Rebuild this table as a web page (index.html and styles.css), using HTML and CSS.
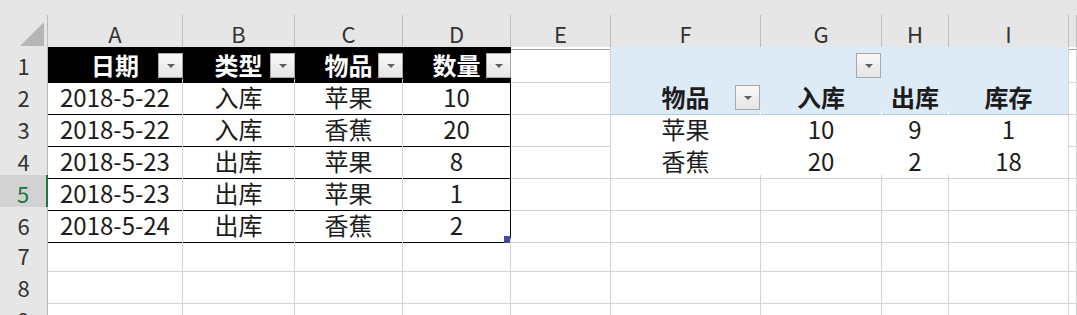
FILE: index.html
```html
<!DOCTYPE html>
<html lang="zh-CN">

<head>
    <meta charset="UTF-8">
    <title>入库出库统计</title>
    <link rel="stylesheet" href="styles.css">
</head>

<body>
    <div class="sheet">
        <!-- franja superior gris -->
        <div class="strip"></div>

        <!-- cabecera de columnas -->
        <div class="row colhead">
            <div class="corner"><span class="tri"></span></div>
            <div>A</div><div>B</div><div>C</div><div>D</div><div>E</div>
            <div>F</div><div>G</div><div>H</div><div>I</div><div></div>
        </div>

        <!-- fila 1: cabecera de la tabla + pivote -->
        <div class="row">
            <div class="rh">1</div>
            <div class="c th"><span></span><b>日期</b><i class="dd"></i></div>
            <div class="c th"><span></span><b>类型</b><i class="dd"></i></div>
            <div class="c th"><span></span><b>物品</b><i class="dd"></i></div>
            <div class="c th th-last"><span></span><b>数量</b><i class="dd"></i></div>
            <div class="c"></div>
            <div class="c pv"></div>
            <div class="c pv btn-cell"><span></span><b></b><i class="dd"></i></div>
            <div class="c pv"></div>
            <div class="c pv pv-end"></div>
            <div class="c"></div>
        </div>

        <div class="row">
            <div class="rh">2</div>
            <div class="c td">2018-5-22</div>
            <div class="c td">入库</div>
            <div class="c td">苹果</div>
            <div class="c td td-last">10</div>
            <div class="c"></div>
            <div class="c pv pv-head btn-cell"><span></span><b>物品</b><i class="dd"></i></div>
            <div class="c pv pv-head"><b>入库</b></div>
            <div class="c pv pv-head"><b>出库</b></div>
            <div class="c pv pv-head pv-end"><b>库存</b></div>
            <div class="c"></div>
        </div>

        <div class="row">
            <div class="rh">3</div>
            <div class="c td">2018-5-22</div>
            <div class="c td">入库</div>
            <div class="c td">香蕉</div>
            <div class="c td td-last">20</div>
            <div class="c"></div>
            <div class="c pb">苹果</div>
            <div class="c pb">10</div>
            <div class="c pb">9</div>
            <div class="c pb pv-end">1</div>
            <div class="c"></div>
        </div>

        <div class="row">
            <div class="rh">4</div>
            <div class="c td">2018-5-23</div>
            <div class="c td">出库</div>
            <div class="c td">苹果</div>
            <div class="c td td-last">8</div>
            <div class="c"></div>
            <div class="c pb pb-last">香蕉</div>
            <div class="c pb pb-last">20</div>
            <div class="c pb pb-last">2</div>
            <div class="c pb pb-last pv-end">18</div>
            <div class="c"></div>
        </div>

        <div class="row">
            <div class="rh active">5</div>
            <div class="c td">2018-5-23</div>
            <div class="c td">出库</div>
            <div class="c td">苹果</div>
            <div class="c td td-last">1</div>
            <div class="c"></div><div class="c"></div><div class="c"></div>
            <div class="c"></div><div class="c"></div><div class="c"></div>
        </div>

        <div class="row">
            <div class="rh">6</div>
            <div class="c td">2018-5-24</div>
            <div class="c td">出库</div>
            <div class="c td">香蕉</div>
            <div class="c td td-last">2<span class="handle"></span></div>
            <div class="c"></div><div class="c"></div><div class="c"></div>
            <div class="c"></div><div class="c"></div><div class="c"></div>
        </div>

        <div class="row">
            <div class="rh">7</div>
            <div class="c"></div><div class="c"></div><div class="c"></div><div class="c"></div><div class="c"></div>
            <div class="c"></div><div class="c"></div><div class="c"></div><div class="c"></div><div class="c"></div>
        </div>

        <div class="row">
            <div class="rh">8</div>
            <div class="c"></div><div class="c"></div><div class="c"></div><div class="c"></div><div class="c"></div>
            <div class="c"></div><div class="c"></div><div class="c"></div><div class="c"></div><div class="c"></div>
        </div>

        <div class="row">
            <div class="rh">9</div>
            <div class="c"></div><div class="c"></div><div class="c"></div><div class="c"></div><div class="c"></div>
            <div class="c"></div><div class="c"></div><div class="c"></div><div class="c"></div><div class="c"></div>
        </div>
    </div>
</body>

</html>
```

FILE: styles.css
```css
/* Estilos generales */
body {
    margin: 0;
    padding: 0;
    background: #fff;
    font-family: "Noto Sans CJK SC", "Noto Sans", sans-serif;
    color: #1c1c1c;
    width: 1077px;
    height: 315px;
    overflow: hidden;
}

.sheet {
    display: flex;
    flex-direction: column;
}

.strip {
    height: 15px;
    background: #e6e6e6;
}

.row {
    display: grid;
    grid-template-columns: 48px 135px 112px 108px 108px 100px 150px 121px 67px 120px 1fr;
    height: 32px;
}

.row > div {
    box-sizing: border-box;
    display: flex;
    align-items: center;
    justify-content: center;
}

/* Cabecera de columnas */
.colhead {
    background: #e6e6e6;
    font-size: 22px;
    color: #333;
}

.colhead > div {
    border-right: 1px solid #bdbdbd;
    border-bottom: 1px solid #a3a3a3;
    padding-top: 2px;
}

.corner {
    justify-content: flex-end !important;
    align-items: flex-end !important;
    padding: 0 3px 3px 0;
}

.tri {
    width: 0;
    height: 0;
    border-left: 24px solid transparent;
    border-bottom: 24px solid #b5b5b5;
}

/* Números de fila */
.rh {
    background: #e6e6e6;
    border-right: 1px solid #b9b9b9;
    border-bottom: 1px solid #d2d2d2;
    font-size: 22px;
    color: #333;
}

.rh.active {
    background: #d2d2d2;
    color: #217346;
    border-right: 2px solid #217346;
}

/* Celdas */
.c {
    border-right: 1px solid #d4d4d4;
    border-bottom: 1px solid #d4d4d4;
    font-size: 24px;
    position: relative;
}

.th {
    background: #000;
    color: #fff;
    border-right-color: #000;
    border-bottom-color: #000;
    display: grid !important;
    grid-template-columns: 25px 1fr 25px;
    align-items: center;
}

.th b,
.btn-cell b {
    text-align: center;
    font-weight: 700;
}

.btn-cell {
    display: grid !important;
    grid-template-columns: 25px 1fr 25px;
    align-items: center;
}

.td {
    border-bottom-color: #000;
}

.td-last,
.th-last {
    border-right: 1px solid #000;
}

/* Botón de filtro */
.dd {
    width: 25px;
    height: 25px;
    box-sizing: border-box;
    border: 1px solid #a8a8a8;
    background: linear-gradient(#fafafa, #e4e4e4);
    display: flex;
    align-items: center;
    justify-content: center;
    margin-top: 2px;
}

.dd::after {
    content: "";
    border-left: 4px solid transparent;
    border-right: 4px solid transparent;
    border-top: 4px solid #606060;
}

.th .dd {
    margin-left: 1px;
}

/* Tabla dinámica */
.pv {
    background: #ddebf7;
    border-right-color: #ddebf7;
    border-bottom-color: #ddebf7;
}

.pv-head {
    border-bottom-color: #b4cde6;
}

.pv-head b {
    font-weight: 700;
}

.pv-end {
    border-right-color: #d4d4d4;
}

.pb {
    border-right-color: #fff;
    border-bottom-color: #fff;
}

.pb.pv-end {
    border-right-color: #d4d4d4;
}

.pb-last {
    border-bottom-color: #d4d4d4;
}

/* Asa de la tabla */
.handle {
    position: absolute;
    right: -1px;
    bottom: -1px;
    width: 7px;
    height: 7px;
    background: #464a94;
}
```
